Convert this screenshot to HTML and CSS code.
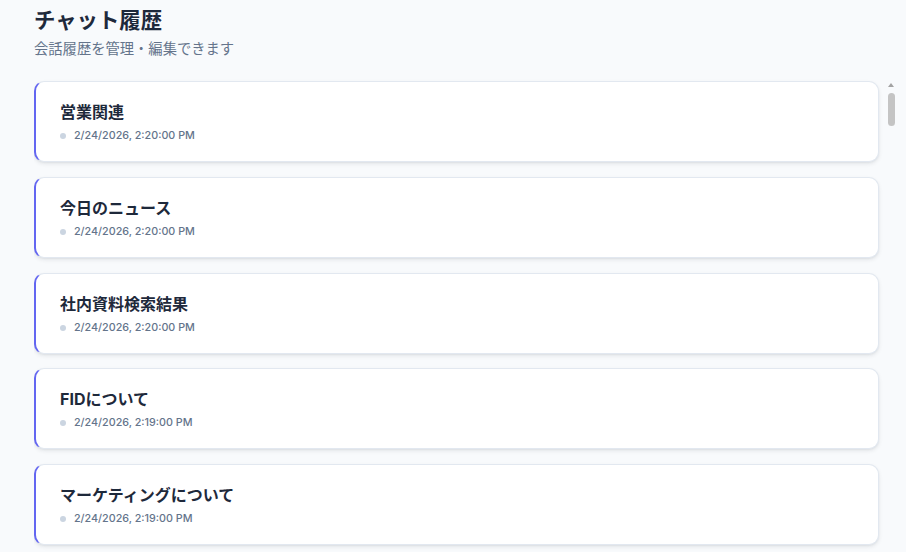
FILE: index.html
```html
<!DOCTYPE html>
<html lang="ja">
<head>
<meta charset="utf-8">
<link rel="stylesheet" href="styles.css">
</head>
<body>
<main class="page">
  <header class="header">
    <h1 class="title">チャット履歴</h1>
    <p class="subtitle">会話履歴を管理・編集できます</p>
  </header>
  <div class="list">
    <div class="cards">
      <div class="card"><div class="card-title">営業関連</div><div class="card-date"><span class="dot"></span>2/24/2026, 2:20:00 PM</div></div>
      <div class="card"><div class="card-title">今日のニュース</div><div class="card-date"><span class="dot"></span>2/24/2026, 2:20:00 PM</div></div>
      <div class="card"><div class="card-title">社内資料検索結果</div><div class="card-date"><span class="dot"></span>2/24/2026, 2:20:00 PM</div></div>
      <div class="card"><div class="card-title">FIDについて</div><div class="card-date"><span class="dot"></span>2/24/2026, 2:19:00 PM</div></div>
      <div class="card"><div class="card-title">マーケティングについて</div><div class="card-date"><span class="dot"></span>2/24/2026, 2:19:00 PM</div></div>
    </div>
    <div class="scrollbar" aria-hidden="true">
      <span class="scroll-arrow"></span>
      <span class="scroll-thumb"></span>
    </div>
  </div>
</main>
</body>
</html>
```
FILE: styles.css
```css
* { box-sizing: border-box; }
html, body {
  margin: 0;
  height: 100%;
  overflow: hidden;
  background: #f8fafc;
  font-family: Inter, "Noto Sans CJK JP", sans-serif;
  color: #1e293b;
}
.page {
  height: 100%;
  display: flex;
  flex-direction: column;
  padding: 6px 7px 0 34px;
}
.header {
  padding-bottom: 19px;
}
.title {
  margin: 0;
  font-size: 21.4px;
  line-height: 28px;
  font-weight: 700;
  color: #1e293b;
}
.subtitle {
  margin: 5px 0 0;
  font-size: 14.3px;
  line-height: 20px;
  color: #64748b;
}
.list {
  flex: 1;
  min-height: 0;
  overflow: hidden;
  display: flex;
  gap: 4px;
}
.cards {
  flex: 1;
  min-width: 0;
  padding-top: 3px;
  display: flex;
  flex-direction: column;
  gap: 14.75px;
}
.card {
  flex: none;
  background: #ffffff;
  border: 1px solid #e2e8f0;
  border-left: 2px solid #6366f1;
  border-radius: 10px;
  box-shadow: 0 2px 4px rgba(15, 23, 42, 0.08), 0 1px 2px rgba(15, 23, 42, 0.05);
  padding: 18px 24px 17px 24px;
  height: 81px;
}
.card-title {
  font-size: 16px;
  line-height: 24px;
  font-weight: 700;
  color: #1e293b;
}
.card-date {
  margin-top: 4px;
  display: flex;
  align-items: center;
  gap: 8px;
  font-size: 10.75px;
  line-height: 16px;
  font-weight: 500;
  color: #64748b;
}
.dot {
  width: 6px;
  height: 6px;
  border-radius: 50%;
  background: #cbd5e1;
}
.scrollbar {
  flex: none;
  width: 16px;
  display: flex;
  flex-direction: column;
  align-items: center;
  padding-top: 5px;
}
.scroll-arrow {
  width: 0;
  height: 0;
  border-left: 3px solid transparent;
  border-right: 3px solid transparent;
  border-bottom: 4px solid #a3a3a3;
}
.scroll-thumb {
  margin-top: 6px;
  width: 7px;
  height: 33px;
  border-radius: 4px;
  background: #c4c4c4;
}
```
